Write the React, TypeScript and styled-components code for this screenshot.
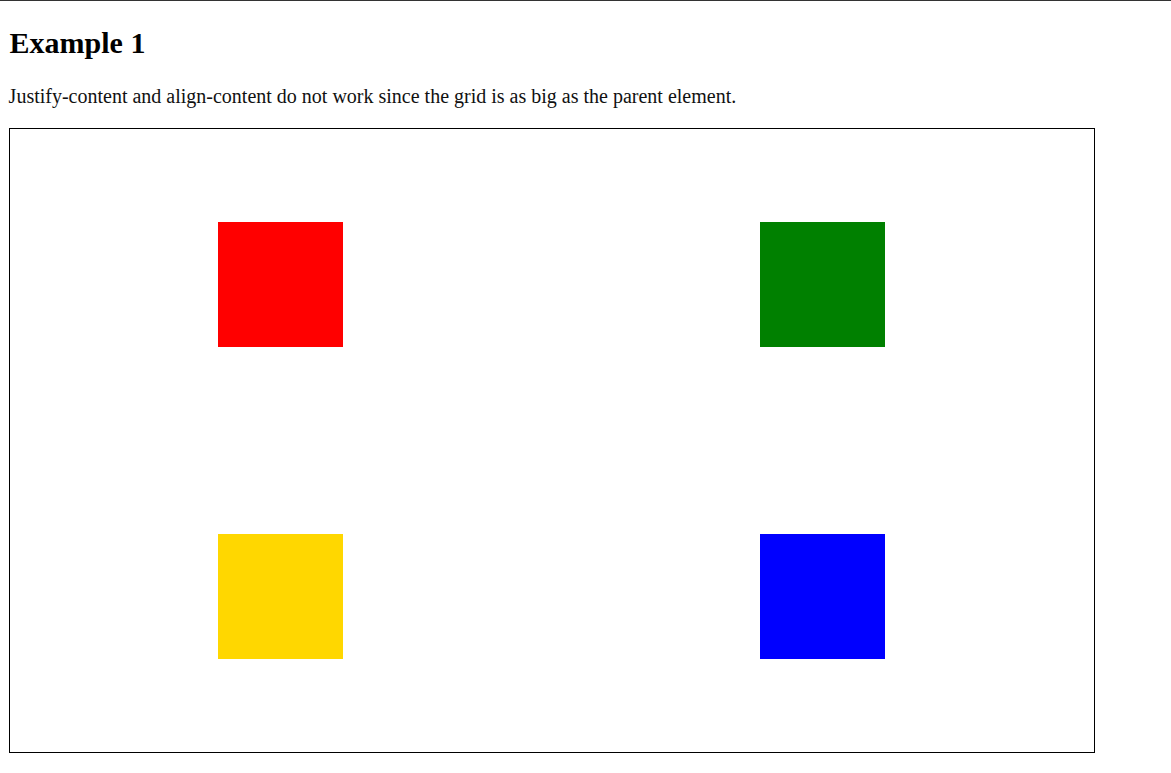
import React from "react";
import styled, { createGlobalStyle } from "styled-components";

const Global = createGlobalStyle`
  html, body { margin: 0; padding: 0; background: #fff; }
  body { font-family: "Liberation Serif", "Times New Roman", serif; color: #000; font-size: 20px; }
`;

const TopRule = styled.div`
  border-top: 1px solid #333;
`;

const Page = styled.div`
  padding: 0 0 0 8.6px;
`;

const Title = styled.h2`
  font-size: 30px;
  font-weight: bold;
  margin: 25px 0 25px 1px;
`;

const Note = styled.p`
  font-size: 20px;
  margin: 0 0 20px 0;
  color: #111;
`;

const Grid = styled.div`
  width: 1084px;
  height: 623px;
  border: 1px solid #000;
  display: grid;
  grid-template-columns: 1fr 1fr;
  grid-template-rows: 1fr 1fr;
  place-items: center;
`;

const Square = styled.div<{ $color: string }>`
  width: 125px;
  height: 125px;
  background: ${(p) => p.$color};
`;

export default function App() {
  return (
    <>
      <Global />
      <TopRule />
      <Page>
        <Title>Example 1</Title>
        <Note>Justify-content and align-content do not work since the grid is as big as the parent element.</Note>
        <Grid>
          <Square $color="red" />
          <Square $color="green" />
          <Square $color="gold" />
          <Square $color="blue" />
        </Grid>
      </Page>
    </>
  );
}
